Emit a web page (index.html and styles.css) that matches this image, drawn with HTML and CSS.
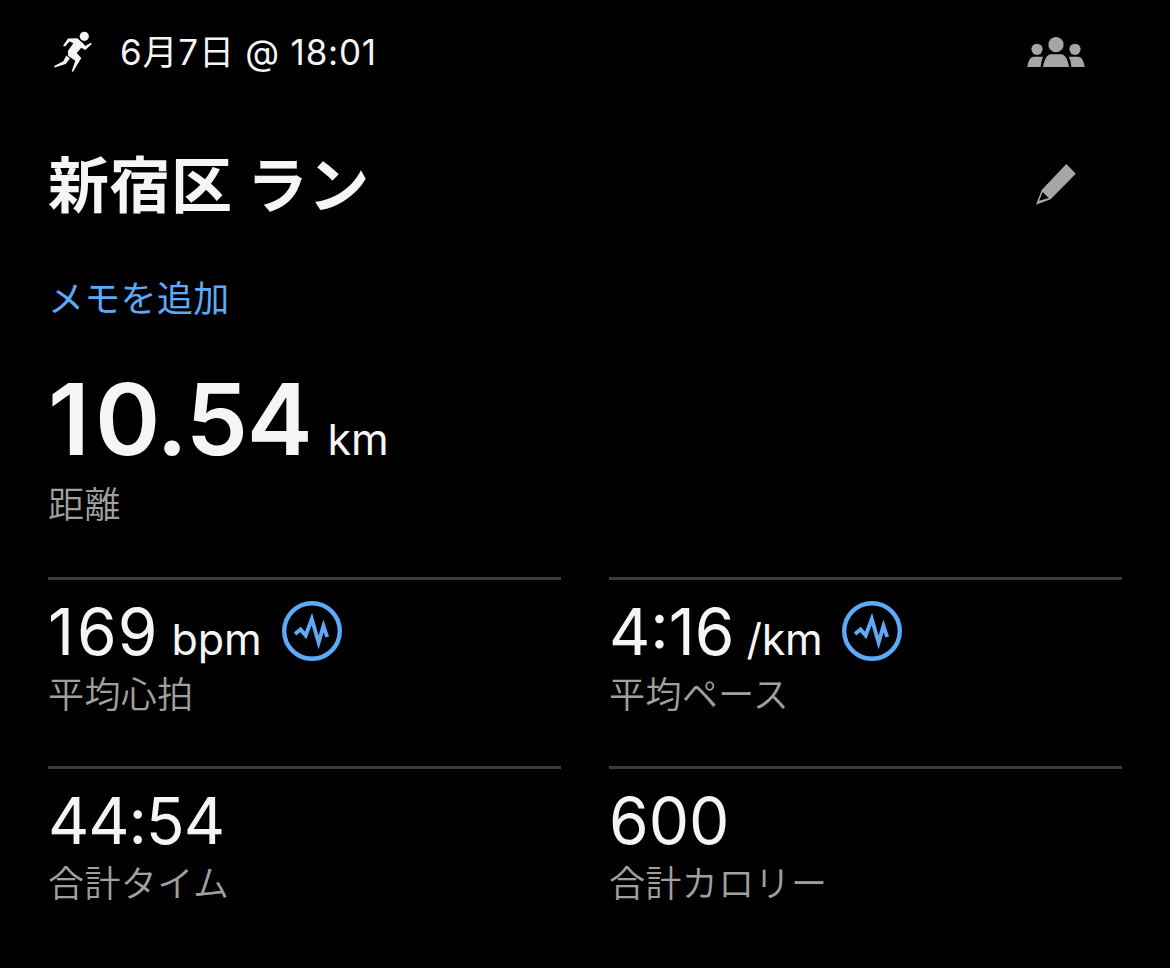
FILE: index.html
```html
<!DOCTYPE html>
<html lang="ja">
<head>
    <meta charset="UTF-8">
    <meta name="viewport" content="width=device-width, initial-scale=1.0">
    <title>新宿区 ラン</title>
    <link rel="stylesheet" href="styles.css">
</head>
<body>
    <div class="workout">
        <div class="topbar">
            <svg class="runner" viewBox="0 0 42 44">
                <circle cx="32.3" cy="6.3" r="4.6" />
                <path d="M11 15.7 L16 8.6 L25.3 8.3 L30.7 13 L33.3 16 L39 12.7 L39.8 14.1 L33.3 20 L29.3 17.7 L24.7 22.9 L29.3 28 L21 41.8 L19.7 41.2 L23.3 30.7 L16 25.8 L16 20.7 L21.3 13.3 L17.6 11.4 L13 16.4 Z" />
                <path d="M14.3 25.6 L18 28.6 L13.6 34 L2.6 37.4 L2.2 36 L11.3 31.3 Z" />
            </svg>
            <span class="date">6月7日 @ 18:01</span>
            <svg class="people" viewBox="0 0 60 32">
                <circle cx="30" cy="8.7" r="7.6" />
                <circle cx="11" cy="13.3" r="5.6" />
                <circle cx="49" cy="13.3" r="5.6" />
                <path d="M17 31 C18.5 22 21.5 18.3 25 18.3 H35 C38.5 18.3 41.5 22 43 31 Z" />
                <path d="M1.3 31 C2.5 24 4.5 20.7 7.5 20.7 H17.3 C16 23 15 27 14.6 31 Z" />
                <path d="M58.7 31 C57.5 24 55.5 20.7 52.5 20.7 H42.7 C44 23 45 27 45.4 31 Z" />
            </svg>
        </div>

        <div class="titlebar">
            <h1>新宿区 ラン</h1>
            <svg class="pencil" viewBox="0 0 44 45">
                <path fill-rule="evenodd" d="M2 42.8 L7.7 28 L32.3 2 L41.8 11.7 L16.7 37.3 Z M8.6 30 L5.2 38.8 L14.8 36 Z" />
            </svg>
        </div>

        <a class="memo">メモを追加</a>

        <div class="distance">
            <div class="big"><span class="number"><span class="one">1</span>0.54</span><span class="unit">km</span></div>
            <p class="label">距離</p>
        </div>

        <div class="stats">
            <div class="stat">
                <div class="value">
                    <span class="number heart"><span class="one">1</span>69</span><span class="unit">bpm</span>
                    <svg class="graph" viewBox="0 0 60 60">
                        <circle cx="30" cy="30" r="27.8" />
                        <polyline points="13,33 18.5,28.4 23.7,34.5 29.8,18 36.6,41.5 41.5,25 45.2,36" />
                    </svg>
                </div>
                <p class="label">平均心拍</p>
            </div>
            <div class="stat">
                <div class="value">
                    <span class="number">4:16</span><span class="unit pace">/km</span>
                    <svg class="graph" viewBox="0 0 60 60">
                        <circle cx="30" cy="30" r="27.8" />
                        <polyline points="13,33 18.5,28.4 23.7,34.5 29.8,18 36.6,41.5 41.5,25 45.2,36" />
                    </svg>
                </div>
                <p class="label">平均ペース</p>
            </div>
            <div class="stat">
                <div class="value"><span class="number time">44:54</span></div>
                <p class="label">合計タイム</p>
            </div>
            <div class="stat">
                <div class="value"><span class="number">600</span></div>
                <p class="label">合計カロリー</p>
            </div>
        </div>
    </div>
</body>
</html>
```
FILE: styles.css
```css
body {
    margin: 0;
    background-color: #000;
    color: #f5f5f5;
    font-family: Inter, "Noto Sans CJK JP", sans-serif;
}

.workout {
    box-sizing: border-box;
    height: 968px;
    padding: 0 48px;
    overflow: hidden;
}

.topbar {
    display: flex;
    align-items: center;
    height: 104px;
}

.runner {
    width: 42px;
    height: 44px;
    margin-left: 4px;
    fill: #f5f5f5;
}

.date {
    margin-left: 26px;
    font-size: 35px;
    letter-spacing: 0.8px;
    line-height: 44px;
}

.people {
    width: 60px;
    height: 32px;
    margin-left: auto;
    margin-right: 36px;
    fill: #a6a6a6;
}

.titlebar {
    display: flex;
    align-items: center;
    justify-content: space-between;
    height: 81px;
    margin-top: 40px;
}

h1 {
    margin: 0 0 5px;
    font-family: "Noto Sans CJK JP", sans-serif;
    font-size: 61px;
    font-weight: 700;
    letter-spacing: 0.5px;
    line-height: 72px;
}

.pencil {
    width: 44px;
    height: 45px;
    margin-right: 44px;
    fill: #a6a6a6;
}

.memo {
    display: block;
    margin-top: 49px;
    color: #5caaf8;
    font-family: "Noto Sans CJK JP", sans-serif;
    font-size: 36px;
    letter-spacing: 0.3px;
    line-height: 44px;
}

.distance {
    height: 208px;
    margin-top: 51px;
}

.big {
    display: flex;
    align-items: baseline;
    height: 100px;
    line-height: 100px;
}

.big .number {
    font-size: 99px;
    font-weight: 600;
    letter-spacing: -1.2px;
}

.big .one {
    letter-spacing: 5px;
}

.unit {
    margin-left: 16px;
    font-size: 43px;
}

.label {
    margin: 11px 0 0;
    color: #a0a0a0;
    font-family: "Noto Sans CJK JP", sans-serif;
    font-size: 36px;
    font-weight: 350;
    letter-spacing: 0.4px;
    line-height: 44px;
}

.stats {
    display: grid;
    grid-template-columns: 1fr 1fr;
    column-gap: 48px;
}

.stat {
    box-sizing: border-box;
    height: 189px;
    padding-top: 21px;
    border-top: 3px solid #3c3c3c;
}

.value {
    display: flex;
    align-items: baseline;
    height: 60px;
    line-height: 62px;
}

.value .number {
    font-size: 64px;
}

.heart {
    letter-spacing: 1px;
}

.heart .one {
    letter-spacing: 3px;
}

.heart + .unit {
    margin-left: 13px;
}

.time {
    letter-spacing: -1.1px;
}

.pace {
    margin-left: 12px;
    letter-spacing: -0.3px;
}

.stat .label {
    margin-top: 9px;
}

.graph {
    align-self: flex-start;
    width: 60px;
    height: 60px;
    margin-left: 20px;
    fill: none;
    stroke: #5caaf8;
    stroke-width: 4.4;
}

.graph polyline {
    stroke-width: 3.9;
    stroke-miterlimit: 10;
}
```
